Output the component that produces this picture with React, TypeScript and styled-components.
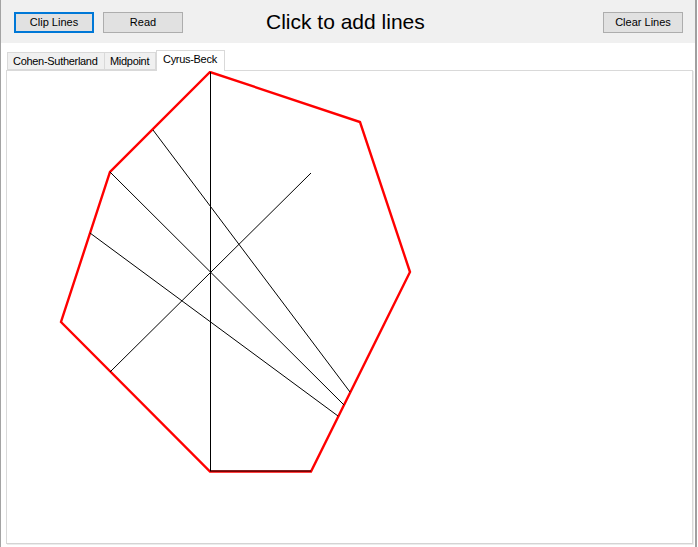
import { FC } from 'react';
import styled, { createGlobalStyle } from 'styled-components';

const GlobalStyle = createGlobalStyle`
	html, body {
		margin: 0;
		padding: 0;
		overflow: hidden;
		background: #ffffff;
	}
`;

const Window = styled.div`
	width: 698px;
	height: 547px;
	box-sizing: border-box;
	display: flex;
	flex-direction: column;
	background: #ffffff;
	border-left: 1px solid #a3a3a3;
	border-right: 1px solid #ffffff;
	box-shadow: inset -2px 0 0 #a0a0a0;
	font-family: 'Liberation Sans', Arial, sans-serif;
	color: #000000;
`;

const Toolbar = styled.div`
	height: 43px;
	flex: 0 0 43px;
	box-sizing: border-box;
	display: flex;
	align-items: flex-start;
	padding: 12px 12px 0 13px;
	background: #f0f0f0;
	margin-right: 2px;
`;

const FormButton = styled.button<{ $focused?: boolean; $gap?: number }>`
	width: 80px;
	height: 21px;
	box-sizing: border-box;
	margin: 0 0 0 ${p => p.$gap ?? 0}px;
	padding: 0;
	background: #e1e1e1;
	border: ${p => (p.$focused ? '2px solid #0078d7' : '1px solid #adadad')};
	font-family: 'Liberation Sans', Arial, sans-serif;
	font-size: 11px;
	color: #000000;
	line-height: 1;
`;

const Title = styled.div`
	margin-left: 83px;
	margin-right: auto;
	margin-top: -2px;
	font-size: 21px;
	line-height: 24px;
	white-space: nowrap;
`;

const TabArea = styled.div`
	flex: 1;
	display: flex;
	flex-direction: column;
	padding: 7px 0 0 5px;
`;

const TabStrip = styled.div`
	height: 20px;
	display: flex;
	align-items: flex-end;
	padding-left: 1px;
	position: relative;
	z-index: 1;
`;

interface TabProps {
	$active?: boolean;
	$first?: boolean;
	$width: number;
}

const Tab = styled.div<TabProps>`
	width: ${p => p.$width}px;
	height: ${p => (p.$active ? 21 : 18)}px;
	box-sizing: border-box;
	margin-bottom: ${p => (p.$active ? -1 : 0)}px;
	border: 1px solid #d9d9d9;
	border-bottom: ${p => (p.$active ? 'none' : '1px solid #d9d9d9')};
	border-left: ${p => (p.$first || p.$active ? '1px solid #d9d9d9' : 'none')};
	background: ${p => (p.$active ? '#ffffff' : '#f0f0f0')};
	font-size: 11px;
	line-height: ${p => (p.$active ? 17 : 16)}px;
	padding-left: ${p => (p.$active ? 6 : 5)}px;
	white-space: nowrap;
	letter-spacing: -0.3px;
`;

const Panel = styled.div`
	width: 687px;
	height: 474px;
	box-sizing: border-box;
	border: 1px solid #d9d9d9;
	border-bottom-color: #d4d4d4;
	background: #ffffff;
	box-shadow: 1px 1px 0 #ececec;
`;

const Canvas = styled.svg`
	display: block;
`;

const polygon = '210,72 360,122 410,272 311,471.5 210,471.5 61,322 110,172';

const lines: [number, number, number, number][] = [
	[210.5, 72, 210.5, 471],
	[153, 130, 350, 392],
	[110, 172, 344, 405],
	[90, 233, 338, 416],
	[110, 372, 311, 173],
	[210, 471, 311, 471],
];

const App: FC = () => {
	return (
		<>
			<GlobalStyle />
			<Window>
				<Toolbar>
					<FormButton $focused>Clip Lines</FormButton>
					<FormButton $gap={9}>Read</FormButton>
					<Title>Click to add lines</Title>
					<FormButton>Clear Lines</FormButton>
				</Toolbar>
				<TabArea>
					<TabStrip>
						<Tab $first $width={98}>Cohen-Sutherland</Tab>
						<Tab $width={51}>Midpoint</Tab>
						<Tab $active $width={69}>Cyrus-Beck</Tab>
					</TabStrip>
					<Panel>
						<Canvas width={685} height={472} viewBox="7 71 685 472">
							<polygon
								points={polygon}
								fill="none"
								stroke="#ff0000"
								strokeWidth={2.4}
								strokeLinejoin="miter"
							/>
							{lines.map(([x1, y1, x2, y2], i) => (
								<line
									key={i}
									x1={x1}
									y1={y1}
									x2={x2}
									y2={y2}
									stroke="#000000"
									strokeWidth={1}
								/>
							))}
						</Canvas>
					</Panel>
				</TabArea>
			</Window>
		</>
	);
};

export default App;
